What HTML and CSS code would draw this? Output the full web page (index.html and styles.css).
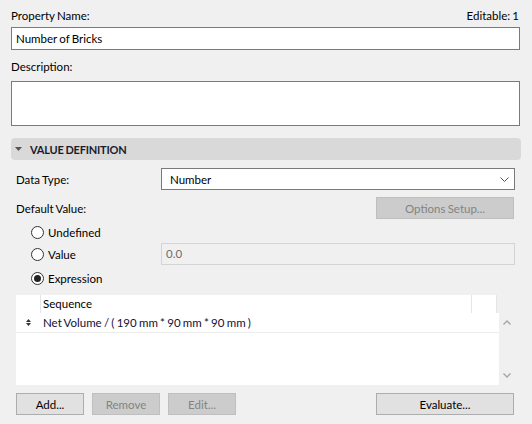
FILE: index.html
```html
<!DOCTYPE html>
<html>
<head>
<meta charset="utf-8">
<link rel="stylesheet" href="styles.css">
</head>
<body>
<div class="page">
  <div class="toprow"><span>Property Name:</span><span>Editable: 1</span></div>
  <div class="textbox name">Number of Bricks</div>
  <div class="label desc">Description:</div>
  <div class="textbox area"></div>
  <div class="section"><svg class="tri" width="7" height="4" viewBox="0 0 7 4"><path d="M0 0H7L3.5 4Z" fill="#555"/></svg><span>VALUE DEFINITION</span></div>
  <div class="vd">
    <div class="grow dt">
      <span class="lbl">Data Type:</span>
      <div class="select"><span>Number</span><svg width="9" height="5" viewBox="0 0 9 5"><path d="M0.5 0.5L4.5 4.5L8.5 0.5" fill="none" stroke="#555" stroke-width="1"/></svg></div>
    </div>
    <div class="grow dv">
      <span class="lbl">Default Value:</span>
      <div class="btnwrap"><div class="btn disabled opts">Options Setup...</div></div>
    </div>
    <div class="grow rr r1"><span class="radio-item"><span class="radio"></span>Undefined</span></div>
    <div class="grow rr r2"><span class="radio-item"><span class="radio"></span>Value</span><div class="valinput">0.0</div></div>
    <div class="grow rr r3"><span class="radio-item"><span class="radio checked"></span>Expression</span></div>
    <div class="list">
      <div class="table">
        <div class="thead">
          <div class="th c0"></div>
          <div class="th c1">Sequence</div>
          <div class="th c2"></div>
        </div>
        <div class="tbody">
          <div class="tr">
            <div class="td c0"><svg width="5" height="7" viewBox="0 0 5 7"><path d="M0 3H5L2.5 0Z M0 4H5L2.5 7Z" fill="#333"/></svg></div>
            <div class="td c1">Net Volume / ( 190 mm * 90 mm * 90 mm )</div>
          </div>
        </div>
      </div>
      <div class="scroll">
        <svg width="8" height="5" viewBox="0 0 8 5"><path d="M0.5 4.5L4 1L7.5 4.5" fill="none" stroke="#a6a6a6" stroke-width="1.4"/></svg>
        <svg width="8" height="5" viewBox="0 0 8 5"><path d="M0.5 0.5L4 4L7.5 0.5" fill="none" stroke="#a6a6a6" stroke-width="1.4"/></svg>
      </div>
    </div>
    <div class="buttons">
      <div class="left">
        <div class="btn add">Add...</div>
        <div class="btn disabled rem">Remove</div>
        <div class="btn disabled edit">Edit...</div>
      </div>
      <div class="btn eval">Evaluate...</div>
    </div>
  </div>
</div>
</body>
</html>
```

FILE: styles.css
```css
* { box-sizing: border-box; }
html, body { margin: 0; padding: 0; }
body {
  background: #f0f0f0;
  font-family: Lato, "Noto Sans", sans-serif;
  font-size: 11.5px;
  word-spacing: -0.7px;
  color: #000;
  width: 532px;
  height: 424px;
  overflow: hidden;
}
.page {
  padding: 8px 12px 0 11px;
}
.toprow {
  display: flex;
  justify-content: space-between;
  line-height: 16px;
  height: 16px;
  padding-right: 1px;
}
.textbox {
  background: #fff;
  border: 1px solid #7a7a7a;
}
.name {
  margin-top: 3px;
  height: 23px;
  line-height: 21px;
  padding-left: 4px;
}
.label { line-height: 16px; }
.desc { margin-top: 9px; }
.area {
  margin-top: 6px;
  height: 45px;
}
.section {
  margin-top: 12px;
  margin-right: -1px;
  height: 22px;
  background: #d9d9d9;
  border-radius: 4px;
  display: flex;
  align-items: center;
  padding-left: 4px;
  font-weight: bold;
  color: #1b1b2e;
  font-size: 11px;
  letter-spacing: -0.2px;
}
.tri { margin-right: 8px; margin-left: 0; }
.vd {
  padding: 0 5px 0 5px;
}
.grow {
  display: grid;
  grid-template-columns: 145px 1fr;
  align-items: center;
}
.dt { margin-top: 8px; height: 22px; }
.dv { margin-top: 7px; height: 22px; }
.select {
  height: 22px;
  background: #fff;
  border: 1px solid #7a7a7a;
  display: flex;
  align-items: center;
  justify-content: space-between;
  padding: 0 5px 0 8px;
}
.select svg { margin-top: 1px; }
.btnwrap { display: flex; justify-content: flex-end; padding-right: 1px; }
.btn {
  height: 22px;
  border: 1px solid #adadad;
  background: #e1e1e1;
  display: flex;
  align-items: center;
  justify-content: center;
}
.btn.disabled {
  background: #cccccc;
  border-color: #bfbfbf;
  color: #838383;
}
.opts { width: 138px; }
.rr { grid-template-columns: 145px 1fr; }
.r1 { margin-top: 3px; height: 21px; }
.r2 { height: 22px; }
.r3 { margin-top: 3px; height: 21px; }
.radio-item {
  display: flex;
  align-items: center;
  padding-left: 15px;
}
.radio {
  width: 13px;
  height: 13px;
  border: 1px solid #333;
  border-radius: 50%;
  background: #fff;
  margin-right: 4px;
  display: flex;
  align-items: center;
  justify-content: center;
}
.radio.checked::after {
  content: "";
  width: 7px;
  height: 7px;
  border-radius: 50%;
  background: #222;
}
.valinput {
  height: 22px;
  border: 1px solid #d4d4d4;
  background: #f0f0f0;
  color: #6d6d6d;
  line-height: 20px;
  padding-left: 4px;
}
.list {
  margin-top: 6px;
  height: 90px;
  display: flex;
  padding-right: 1px;
}
.table {
  flex: 1;
  display: flex;
  flex-direction: column;
}
.thead {
  height: 18px;
  background: #fff;
  display: flex;
  margin-right: 2px;
}
.th { height: 18px; line-height: 18px; }
.th.c0 { width: 25px; border-right: 1px solid #e5e5e5; }
.th.c1 { flex: 1; padding-left: 2px; border-right: 1px solid #e5e5e5; }
.th.c2 { width: 25px; border-right: 1px solid #e5e5e5; }
.tbody {
  flex: 1;
  background: #fff;
}
.tr {
  display: flex;
  height: 20px;
  border-bottom: 1px solid #ececec;
  align-items: center;
}
.td.c0 { width: 25px; padding-left: 10px; display: flex; align-items: center; }
.td.c1 { padding-left: 2px; color: #10103a; }
.scroll {
  width: 15px;
  margin-top: 18px;
  padding: 7px 0;
  display: flex;
  flex-direction: column;
  justify-content: space-between;
  align-items: center;
}
.buttons {
  margin-top: 8px;
  display: flex;
  justify-content: space-between;
  padding-right: 1px;
}
.left { display: flex; gap: 8px; }
.add, .rem, .edit { width: 68px; }
.eval { width: 138px; }
```
